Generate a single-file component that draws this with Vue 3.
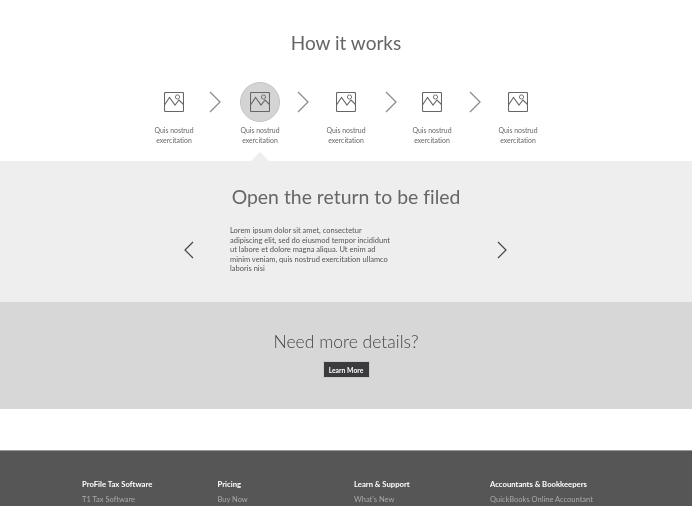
<template>
  <div class="page">
    <section class="how">
      <h2 class="how-title">How it works</h2>
      <div class="steps">
        <template v-for="(step, i) in steps" :key="i">
          <div class="step" :class="{ active: i === activeStep }">
            <div class="step-icon">
              <svg width="20" height="20" viewBox="0 0 20 20" fill="none" stroke="#666" stroke-width="1.1">
                <rect x="0.5" y="0.5" width="19" height="19" rx="1" />
                <path d="M0.5 13 L5.5 5.5 L11 13 L15 8 L19.5 12.5" />
                <circle cx="13.5" cy="5" r="2.1" stroke-width="0.9" />
              </svg>
            </div>
            <p class="step-label">Quis nostrud<br>exercitation</p>
          </div>
          <svg v-if="i < steps.length - 1" class="arrow" :style="arrowGap(i)" width="12" height="22" viewBox="0 0 12 22" fill="none" stroke="#8c8c8c" stroke-width="1.3">
            <path d="M1 1 L11 11 L1 21" />
          </svg>
        </template>
      </div>
    </section>

    <section class="detail">
      <h2 class="detail-title">Open the return to be filed</h2>
      <div class="detail-body">
        <svg class="nav" width="10" height="18" viewBox="0 0 10 18" fill="none" stroke="#444" stroke-width="1.2">
          <path d="M9 1 L1 9 L9 17" />
        </svg>
        <p class="detail-text">
          Lorem ipsum dolor sit amet, consectetur<br>
          adipiscing elit, sed do eiusmod tempor incididunt<br>
          ut labore et dolore magna aliqua. Ut enim ad<br>
          minim veniam, quis nostrud exercitation ullamco<br>
          laboris nisi
        </p>
        <svg class="nav" width="10" height="18" viewBox="0 0 10 18" fill="none" stroke="#444" stroke-width="1.2">
          <path d="M1 1 L9 9 L1 17" />
        </svg>
      </div>
    </section>

    <section class="more">
      <h2 class="more-title">Need more details?</h2>
      <button class="more-btn">Learn More</button>
    </section>

    <footer class="footer">
      <div v-for="col in columns" :key="col.title" class="footer-col" :style="{ width: col.width + 'px' }">
        <h4 class="footer-head">{{ col.title }}</h4>
        <a class="footer-link">{{ col.link }}</a>
      </div>
    </footer>
  </div>
</template>

<script setup>
const steps = [1, 2, 3, 4, 5]
const activeStep = 1

// the arrows don't sit exactly midway between the steps
const arrowNudge = [-2, 0, 2, 0]
const arrowGap = (i) => ({
  marginLeft: 5 + arrowNudge[i] + 'px',
  marginRight: 5 - arrowNudge[i] + 'px'
})

const columns = [
  { title: 'ProFile Tax Software', link: 'T1 Tax Software', width: 135.5 },
  { title: 'Pricing', link: 'Buy Now', width: 136.5 },
  { title: 'Learn & Support', link: "What's New", width: 136 },
  { title: 'Accountants & Bookkeepers', link: 'QuickBooks Online Accountant', width: 150 }
]
</script>

<style>
html, body {
  margin: 0;
  background: #fff;
}
</style>

<style scoped>
.page {
  width: 692px;
  height: 506px;
  overflow: hidden;
  font-family: Lato, "Noto Sans", sans-serif;
  font-variant-ligatures: none;
  color: #555;
  will-change: transform;
}

.how {
  height: 161px;
  box-sizing: border-box;
  padding-top: 31px;
}

.how-title {
  margin: 0;
  text-align: center;
  font-size: 19px;
  line-height: 23px;
  font-weight: 400;
  color: #666;
}

.steps {
  display: flex;
  justify-content: center;
  align-items: flex-start;
  margin-top: 28px;
}

.step {
  position: relative;
  width: 64px;
  text-align: center;
}

.step-icon {
  width: 40px;
  height: 40px;
  margin: 0 auto;
  display: flex;
  align-items: center;
  justify-content: center;
  border-radius: 50%;
}

.step.active .step-icon {
  background: #d4d4d4;
  border: 1px solid #c4c4c4;
  box-sizing: border-box;
}

/* notch pointing at the active step */
.step.active::after {
  content: "";
  position: absolute;
  left: 50%;
  top: 70px;
  margin-left: -9px;
  border-left: 9px solid transparent;
  border-right: 9px solid transparent;
  border-bottom: 9px solid #eee;
}

.step-label {
  margin: 3px 0 0;
  font-size: 6.9px;
  line-height: 10px;
  color: #666;
}

.arrow {
  margin-top: 9px;
  width: 12px;
}

.detail {
  height: 141px;
  box-sizing: border-box;
  padding-top: 23px;
  background: #eee;
}

.detail-title {
  margin: 0;
  text-align: center;
  font-size: 19.4px;
  line-height: 25px;
  font-weight: 400;
  color: #666;
}

.detail-body {
  display: flex;
  align-items: center;
  margin-top: 17px;
  padding-left: 184px;
}

.detail-text {
  width: 267px;
  margin: 0 0 0 36px;
  font-size: 7.5px;
  line-height: 9.6px;
  color: #555;
}

.more {
  height: 107px;
  box-sizing: border-box;
  padding-top: 29px;
  background: #d7d7d7;
  text-align: center;
}

.more-title {
  margin: 0;
  font-size: 17.5px;
  line-height: 22px;
  font-weight: 300;
  color: #444;
}

.more-btn {
  display: block;
  width: 47px;
  height: 17px;
  margin: 8px auto 0;
  padding: 0;
  border: 1px solid #ccc;
  border-radius: 1px;
  background: #3b3b3e;
  color: #fff;
  font-family: inherit;
  font-size: 6.8px;
  font-weight: 700;
}

.footer {
  display: flex;
  margin-top: 41px;
  height: 56px;
  box-sizing: border-box;
  padding: 28px 0 0 82px;
  background: #565656;
  border-top: 1px solid #999;
}

.footer-head {
  margin: 0;
  font-size: 7.7px;
  line-height: 10px;
  font-weight: 700;
  color: #fff;
}

.footer-link {
  display: block;
  margin-top: 6px;
  font-size: 7.5px;
  line-height: 10px;
  color: #aaa;
  white-space: nowrap;
}
</style>
